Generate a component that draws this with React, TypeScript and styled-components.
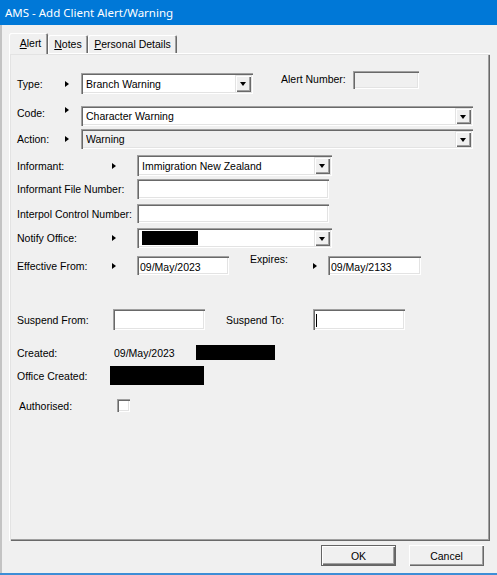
import React from 'react'
import styled, { createGlobalStyle } from 'styled-components'

const GlobalStyle = createGlobalStyle`
  html, body {
    margin: 0;
    padding: 0;
    background: #f0f0f0;
  }
  * { box-sizing: border-box; }
`

const Window = styled.div`
  width: 497px;
  height: 575px;
  display: flex;
  flex-direction: column;
  background: #f0f0f0;
  overflow: hidden;
  font-family: 'Liberation Sans', Arial, sans-serif;
  font-size: 10.5px;
  color: #000;
`

const TitleBar = styled.div`
  height: 25px;
  flex: none;
  display: flex;
  align-items: center;
  padding-left: 5px;
  background: #0078d7;
  color: #fff;
  font-family: 'Noto Sans', 'Open Sans', sans-serif;
  font-size: 11.5px;
`

const Body = styled.div`
  flex: 1;
  display: flex;
  flex-direction: column;
  border-left: 2px solid #c3c3c3;
  padding-left: 7px;
`

const BottomEdge = styled.div`
  height: 2px;
  flex: none;
  margin-top: auto;
  background: #3d8ed6;
`

const TabStrip = styled.div`
  display: flex;
  align-items: flex-end;
  height: 20px;
  margin-top: 8px;
`

const Tab = styled.div<{ $w: number; $active?: boolean }>`
  position: relative;
  z-index: ${p => (p.$active ? 1 : 0)};
  width: ${p => p.$w}px;
  height: ${p => (p.$active ? 21 : 18)}px;
  margin-bottom: ${p => (p.$active ? -1 : 0)}px;
  display: flex;
  justify-content: center;
  padding-top: ${p => (p.$active ? 4 : 3)}px;
  padding-left: ${p => (p.$active ? 4 : 0)}px;
  background: #f0f0f0;
  border-top-left-radius: 2px;
  border-top-right-radius: 2px;
  box-shadow: inset 1px 1px #fff, inset -1px 0 #696969, inset -2px 0 #a0a0a0;
  u { text-decoration: underline; }
`

const Panel = styled.div`
  width: 481px;
  height: 488px;
  flex: none;
  display: flex;
  flex-direction: column;
  padding: 20px 0 0 8px;
  box-shadow: inset 1px 1px #fff, inset 2px 2px #e3e3e3, inset -1px -1px #696969,
    inset -2px -2px #a0a0a0;
`

const Row = styled.div<{ $h: number; $mt: number; $align?: string }>`
  display: flex;
  align-items: ${p => p.$align || 'center'};
  height: ${p => p.$h}px;
  margin-top: ${p => p.$mt}px;
  flex: none;
`

const Label = styled.span<{ $w: number; $ml?: number; $mt?: number; $top?: boolean }>`
  flex: none;
  width: ${p => p.$w}px;
  margin-left: ${p => p.$ml || 0}px;
  margin-top: ${p => p.$mt || 0}px;
  align-self: ${p => (p.$top ? 'flex-start' : 'auto')};
  line-height: 12px;
  white-space: nowrap;
`

const Pointer = styled.span<{ $w: number; $mt?: number }>`
  flex: none;
  width: ${p => p.$w}px;
  display: flex;
  align-self: ${p => (p.$mt !== undefined ? 'flex-start' : 'auto')};
  margin-top: ${p => p.$mt || 0}px;
  &::before {
    content: '';
    width: 0;
    height: 0;
    border-left: 4px solid #000;
    border-top: 3.5px solid transparent;
    border-bottom: 3.5px solid transparent;
  }
`

const sunken = `
  background: #fff;
  box-shadow: inset 1px 1px #a0a0a0, inset 2px 2px #696969, inset -1px -1px #fff,
    inset -2px -2px #e3e3e3;
`

const Combo = styled.div<{ $w: number; $disabled?: boolean }>`
  ${sunken}
  background: ${p => (p.$disabled ? '#f0f0f0' : '#fff')};
  flex: none;
  width: ${p => p.$w}px;
  height: 100%;
  display: flex;
  align-items: center;
  padding: 2px 2px 2px 5px;
  gap: 3px;
`

const ComboText = styled.span`
  flex: 1;
  white-space: nowrap;
  overflow: hidden;
`

const DropButton = styled.span`
  flex: none;
  width: 16px;
  height: 100%;
  display: flex;
  align-items: center;
  justify-content: center;
  background: #f0f0f0;
  box-shadow: inset 1px 1px #e3e3e3, inset 2px 2px #fff, inset -1px -1px #696969,
    inset -2px -2px #a0a0a0;
  &::before {
    content: '';
    width: 0;
    height: 0;
    margin-top: 1px;
    border-top: 4px solid #000;
    border-left: 3.5px solid transparent;
    border-right: 3.5px solid transparent;
  }
`

const TextBox = styled.div<{ $w: number; $h?: number; $disabled?: boolean; $mt?: number }>`
  ${sunken}
  background: ${p => (p.$disabled ? '#f0f0f0' : '#fff')};
  flex: none;
  width: ${p => p.$w}px;
  height: ${p => (p.$h ? `${p.$h}px` : '100%')};
  align-self: ${p => (p.$mt !== undefined ? 'flex-start' : 'auto')};
  margin-top: ${p => p.$mt || 0}px;
  display: flex;
  align-items: center;
  padding: 2px 2px 0 3px;
  white-space: nowrap;
`

const Caret = styled.span`
  width: 1px;
  height: 13px;
  background: #000;
`

const Redacted = styled.span<{ $w: number; $h: number; $ml?: number }>`
  flex: none;
  display: block;
  width: ${p => p.$w}px;
  height: ${p => p.$h}px;
  margin-left: ${p => p.$ml || 0}px;
  background: #000;
`

const Value = styled.span<{ $w: number }>`
  flex: none;
  width: ${p => p.$w}px;
  line-height: 12px;
`

const CheckBox = styled.span`
  ${sunken}
  flex: none;
  width: 13px;
  height: 13px;
`

const Footer = styled.div`
  display: flex;
  justify-content: flex-end;
  gap: 13px;
  padding-right: 13px;
  margin-top: 4px;
`

const Button = styled.button<{ $default?: boolean }>`
  width: 75px;
  height: 21px;
  padding: 0;
  border: ${p => (p.$default ? '1px solid #646464' : 'none')};
  background: #f0f0f0;
  font-family: 'Liberation Sans', Arial, sans-serif;
  font-size: 10.5px;
  color: #000;
  box-shadow: inset 1px 1px #fff, inset -1px -1px #696969, inset -2px -2px #a0a0a0;
`

const App = () => (
  <Window>
    <GlobalStyle />
    <TitleBar>AMS - Add Client Alert/Warning</TitleBar>
    <Body>
      <TabStrip>
        <Tab $w={39} $active>
          <span><u>A</u>lert</span>
        </Tab>
        <Tab $w={40}>
          <span><u>N</u>otes</span>
        </Tab>
        <Tab $w={89}>
          <span><u>P</u>ersonal Details</span>
        </Tab>
      </TabStrip>
      <Panel>
        <Row $h={21} $mt={0}>
          <Label $w={48}>Type:</Label>
          <Pointer $w={16} />
          <Combo $w={172}>
            <ComboText>Branch Warning</ComboText>
            <DropButton />
          </Combo>
          <Label $w={72} $ml={28} $top $mt={0}>Alert Number:</Label>
          <TextBox $w={66} $h={18} $mt={-2} $disabled />
        </Row>
        <Row $h={20} $mt={12} $align="flex-start">
          <Label $w={48} $mt={1}>Code:</Label>
          <Pointer $w={16} $mt={1} />
          <Combo $w={392}>
            <ComboText>Character Warning</ComboText>
            <DropButton />
          </Combo>
        </Row>
        <Row $h={20} $mt={3}>
          <Label $w={48}>Action:</Label>
          <Pointer $w={16} />
          <Combo $w={392} $disabled>
            <ComboText>Warning</ComboText>
            <DropButton />
          </Combo>
        </Row>
        <Row $h={21} $mt={6}>
          <Label $w={95}>Informant:</Label>
          <Pointer $w={25} />
          <Combo $w={195}>
            <ComboText>Immigration New Zealand</ComboText>
            <DropButton />
          </Combo>
        </Row>
        <Row $h={20} $mt={3}>
          <Label $w={120}>Informant File Number:</Label>
          <TextBox $w={192} />
        </Row>
        <Row $h={19} $mt={5}>
          <Label $w={120}>Interpol Control Number:</Label>
          <TextBox $w={192} />
        </Row>
        <Row $h={20} $mt={5}>
          <Label $w={95}>Notify Office:</Label>
          <Pointer $w={25} />
          <Combo $w={195}>
            <ComboText>
              <Redacted $w={58} $h={14} $ml={-2} />
            </ComboText>
            <DropButton />
          </Combo>
        </Row>
        <Row $h={19} $mt={8}>
          <Label $w={95}>Effective From:</Label>
          <Pointer $w={25} />
          <TextBox $w={92}>09/May/2023</TextBox>
          <Label $w={63} $ml={21} $top $mt={-3}>Expires:</Label>
          <Pointer $w={15} />
          <TextBox $w={93}>09/May/2133</TextBox>
        </Row>
        <Row $h={21} $mt={34}>
          <Label $w={96}>Suspend From:</Label>
          <TextBox $w={92} />
          <Label $w={87} $ml={21}>Suspend To:</Label>
          <TextBox $w={92}>
            <Caret />
          </TextBox>
        </Row>
        <Row $h={15} $mt={15}>
          <Label $w={97}>Created:</Label>
          <Value $w={82}>09/May/2023</Value>
          <Redacted $w={79} $h={15} />
        </Row>
        <Row $h={19} $mt={6}>
          <Label $w={93}>Office Created:</Label>
          <Redacted $w={94} $h={19} />
        </Row>
        <Row $h={13} $mt={14}>
          <Label $w={98} $ml={2}>Authorised:</Label>
          <CheckBox />
        </Row>
      </Panel>
      <Footer>
        <Button $default>OK</Button>
        <Button>Cancel</Button>
      </Footer>
    </Body>
    <BottomEdge />
  </Window>
)

export default App
